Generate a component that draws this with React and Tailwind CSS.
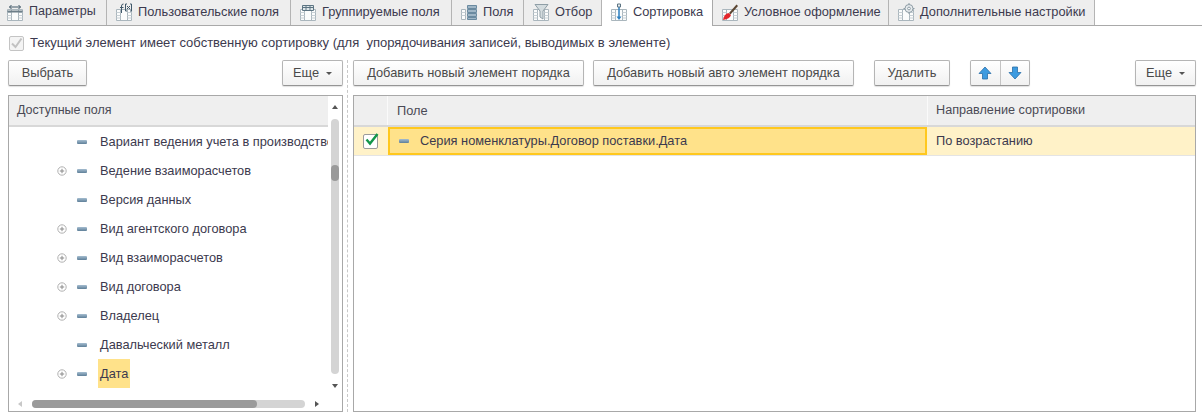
const TableBase = ({ c = "#aab6bd" }) => (
  <g fill="none" stroke={c} strokeWidth="1">
    <path d="M1.5 6.5h15v11h-15z" fill="#fbfcfc" />
    <path d="M5.5 6.5v11M12.5 6.5v11" />
    <path d="M1.5 9.5h4M1.5 12.5h4M1.5 15h4M12.5 9.5h4M12.5 12.5h4M12.5 15h4" stroke="#c8d0d5" />
  </g>
);

function TabIcon({ kind }) {
  return (
    <svg width="18" height="18" viewBox="0 0 18 18" className="shrink-0">
      {kind !== "fields" && <TableBase />}
      {kind === "params" && (
        <g>
          <path d="M1.5 8.5h15" stroke="#6d7f89" strokeWidth="2" />
          <path d="M3.5 4h11M3.5 4l2-2M3.5 4l2 2M14.5 4l-2-2M14.5 4l-2 2" stroke="#3f5666" fill="none" />
        </g>
      )}
      {kind === "user" && (
        <g fill="none" stroke="#40586a">
          <path d="M6.5 10V3q0-2 2-2M5 4.5h3.5" />
          <path d="M12 1h-1.5v7H12M15 1h1.5v7H15M12 3l3 3M15 3l-3 3" />
        </g>
      )}
      {kind === "group" && (
        <g>
          <path d="M3.5 2.5h11v5h-11z" fill="#dfe7ea" stroke="#5d7482" />
          <path d="M7 2.5v5M11 2.5v5M3.5 4.5h11" stroke="#5d7482" />
        </g>
      )}
      {kind === "fields" && (
        <g>
          <path d="M1.5 6.5h4v10h-4z" fill="#fbfcfc" stroke="#aab6bd" />
          <path d="M1.5 9.5h4M1.5 12.5h4" stroke="#c8d0d5" />
          <g fill="#9fb6c6" stroke="#6a8aa0">
            <path d="M7.5 2.5h9v3h-9zM7.5 6.5h9v3h-9zM7.5 10.5h9v3h-9zM7.5 14.5h9v2h-9z" />
          </g>
        </g>
      )}
      {kind === "filter" && <path d="M3 1.5h13l-5 6.5v8l-3-2V8z" fill="#d4dcdf" stroke="#8f9ea6" />}
      {kind === "sort" && (
        <g>
          <path d="M9 3v12" stroke="#2c7fc0" strokeWidth="1.5" />
          <path d="M6.5 13.5L9 17l2.5-3.5z" fill="#2c7fc0" />
          <path d="M7.5 1h3v3h-3z" fill="#e8eef2" stroke="#5d7482" />
        </g>
      )}
      {kind === "cond" && (
        <g>
          <path d="M8 10L15.5 1.5l1.5 1.5L9.5 11.5z" fill="#5b4632" />
          <path d="M2 17q1-6 5.5-7l2.5 2q-1 4-8 5z" fill="#e3262b" />
        </g>
      )}
      {kind === "extra" && (
        <g fill="#e8ecee" stroke="#8d9ca5">
          <circle cx="12" cy="5.5" r="4" />
          <circle cx="12" cy="5.5" r="1.4" fill="#fff" />
          <path d="M12 0v1.5M12 9.5V11M6.5 5.5H8M16 5.5h1.5" />
        </g>
      )}
    </svg>
  );
}

const tabs = [
  ["Параметры", "params", "w-[107px] pl-[6px] text-[12.5px]"],
  ["Пользовательские поля", "user", "w-[184px] pl-[8px]"],
  ["Группируемые поля", "group", "w-[161px] pl-[8px]"],
  ["Поля", "fields", "w-[72px] pl-[8px]"],
  ["Отбор", "filter", "w-[78px] pl-[8px]"],
  ["Сортировка", "sort", "w-[111px] pl-[8px]"],
  ["Условное оформление", "cond", "w-[176px] pl-[8px]"],
  ["Дополнительные настройки", "extra", "w-[206px] pl-[8px]"],
];

const Btn = ({ children, className = "" }) => (
  <button className={`h-[26px] shrink-0 flex items-center justify-center rounded-[2px] border border-[#b5b5b5] border-b-[#959595] bg-gradient-to-b from-white to-[#f1f1f1] shadow-[0_1px_1px_rgba(0,0,0,0.12)] text-[#4a4a4a] ${className}`}>
    {children}
  </button>
);

const More = ({ className = "" }) => (
  <Btn className={`w-[61px] gap-[7px] ${className}`}>
    <span>Еще</span>
    <span className="w-0 h-0 mt-[1px] border-x-[3px] border-x-transparent border-t-[3px] border-t-[#555]" />
  </Btn>
);

const Arrow = ({ dir }) => (
  <svg width="14" height="14" viewBox="0 0 14 14">
    <path
      d={dir === "up" ? "M7 1l6 6.5H9.5V13h-5V7.5H1z" : "M7 13l6-6.5H9.5V1h-5v5.5H1z"}
      fill="#3d9be0"
      stroke="#2a6fa8"
      strokeWidth="0.8"
    />
  </svg>
);

const Dash = () => <span className="block w-[10px] h-[4px] rounded-[1px] bg-gradient-to-b from-[#a5bdd0] to-[#5f8099] shrink-0" />;

const Plus = () => (
  <svg width="10" height="10" viewBox="0 0 10 10" className="shrink-0">
    <circle cx="5" cy="5" r="4.2" fill="#fff" stroke="#b0b0b0" />
    <path d="M2.8 5h4.4M5 2.8v4.4" stroke="#8a8a8a" />
  </svg>
);

const rows = [
  ["Вариант ведения учета в производстве", false],
  ["Ведение взаиморасчетов", true],
  ["Версия данных", false],
  ["Вид агентского договора", true],
  ["Вид взаиморасчетов", true],
  ["Вид договора", true],
  ["Владелец", true],
  ["Давальческий металл", false],
  ["Дата", true, true],
];

export default function App() {
  return (
    <div className="w-[1202px] h-[417px] overflow-hidden bg-white text-[12.8px] text-[#3c3a4e] font-['Liberation_Sans',Arial,sans-serif]">
      <div className="flex h-[26px] border-b border-[#a9a9a9] bg-white">
        {tabs.map(([t, k, w]) => {
          const active = k === "sort";
          return (
            <div
              key={k}
              className={`${w} shrink-0 h-[25px] pb-[2px] flex items-center gap-[5px] border-r border-[#b4b4b4] ${active ? "bg-white border-r-[#a9a9a9] h-[26px] relative z-10 -mb-px" : "bg-[#eeeeee]"}`}
            >
              <TabIcon kind={k} />
              <span className="whitespace-nowrap">{t}</span>
            </div>
          );
        })}
      </div>

      <div className="flex items-center h-[18px] mt-[8px] ml-[9px] gap-[6px] text-[13px]">
        <span className="w-[15px] h-[15px] flex items-center justify-center border border-[#c4c4c4] rounded-[2px] bg-[#f4f4f4]">
          <svg width="13" height="13" viewBox="0 0 13 13">
            <path d="M2 6.5L5.5 10L11.5 1.5" fill="none" stroke="#c2c2c2" strokeWidth="2" />
          </svg>
        </span>
        <span className="whitespace-pre">Текущий элемент имеет собственную сортировку (для  упорядочивания записей, выводимых в элементе)</span>
      </div>

      <div className="flex mt-[8px] pl-[8px] pr-[6px] h-[352px]">
        <div className="w-[335px] shrink-0 flex flex-col">
          <div className="flex justify-between">
            <Btn className="w-[79px]">Выбрать</Btn>
            <More />
          </div>
          <div className="mt-[9px] h-[317px] border border-[#a8a8a8] relative flex flex-col overflow-hidden">
            <div className="h-[31px] shrink-0 mr-[14px] bg-[#efefef] border-b-2 border-[#d8d8d8] flex items-center pl-[8px] text-[12.5px] text-[#4a4a55]">
              Доступные поля
            </div>
            <div className="flex-1 mr-[14px] overflow-hidden">
              {rows.map(([t, plus, sel]) => (
                <div key={t} className="h-[29px] flex items-center">
                  <span className="w-[59px] shrink-0 flex justify-end pr-[1px]">{plus && <Plus />}</span>
                  <span className="w-[19px] shrink-0 flex justify-end"><Dash /></span>
                  <span className={`ml-[11px] h-[29px] flex items-center px-[2px] whitespace-nowrap ${sel ? "bg-[#ffe28a]" : ""}`}>{t}</span>
                </div>
              ))}
            </div>
            {/* scrollbars */}
            <div className="absolute right-[3px] top-[23px] w-[8px] h-[255px] rounded-full bg-[#d4d4d4]">
              <div className="absolute top-[46px] left-0 w-[8px] h-[16px] rounded-full bg-[#9a9a9a]" />
            </div>
            <span className="absolute right-[4px] top-[9px] w-0 h-0 border-x-[3px] border-x-transparent border-b-[4px] border-b-[#555]" />
            <span className="absolute right-[4px] bottom-[23px] w-0 h-0 border-x-[3px] border-x-transparent border-t-[4px] border-t-[#555]" />
            <div className="absolute left-[23px] bottom-[3px] w-[273px] h-[8px] rounded-full bg-[#d4d4d4]">
              <div className="w-[225px] h-[8px] rounded-full bg-[#9a9a9a]" />
            </div>
            <span className="absolute left-[9px] bottom-[4px] w-0 h-0 border-y-[3px] border-y-transparent border-r-[4px] border-r-[#c8c8c8]" />
            <span className="absolute left-[306px] bottom-[4px] w-0 h-0 border-y-[3px] border-y-transparent border-l-[4px] border-l-[#555]" />
          </div>
        </div>

        <div className="w-[10px] shrink-0 flex justify-start pl-[4px]">
          <div className="w-0 h-full border-l border-dashed border-[#c8c8c8]" />
        </div>

        <div className="flex-1 flex flex-col">
          <div className="flex">
            <Btn className="w-[231px]">Добавить новый элемент порядка</Btn>
            <Btn className="w-[261px] ml-[9px]">Добавить новый авто элемент порядка</Btn>
            <Btn className="w-[76px] ml-[20px]">Удалить</Btn>
            <div className="ml-[20px] flex h-[26px] w-[60px] rounded-[2px] border border-[#b5b5b5] border-b-[#959595] bg-gradient-to-b from-white to-[#f1f1f1] shadow-[0_1px_1px_rgba(0,0,0,0.12)]">
              <span className="flex-1 flex items-center justify-center border-r border-[#c4c4c4]"><Arrow dir="up" /></span>
              <span className="flex-1 flex items-center justify-center"><Arrow dir="down" /></span>
            </div>
            <More className="ml-auto" />
          </div>
          <div className="mt-[9px] h-[317px] border border-[#a8a8a8] flex flex-col overflow-hidden text-[#4a4a55]">
            <div className="h-[31px] shrink-0 flex bg-[#efefef] border-b-2 border-[#d8d8d8]">
              <div className="w-[34px] border-r border-[#fafafa]" />
              <div className="w-[540px] pl-[9px] flex items-center border-r border-[#fafafa]">Поле</div>
              <div className="flex-1 pl-[8px] flex items-center text-[12.65px]">Направление сортировки</div>
            </div>
            <div className="h-[28px] shrink-0 flex bg-[#fff2c8] text-[#3c3a4e]">
              <div className="w-[34px] pr-[1px] flex items-center justify-center relative">
                <span className="w-[15px] h-[15px] border border-[#9b9b9b] rounded-[2px] bg-white relative">
                  <svg width="17" height="15" viewBox="0 0 17 15" className="absolute -top-[3px] left-[0px]">
                    <path d="M2.5 7.5L6 11.5L13.5 2" fill="none" stroke="#12964a" strokeWidth="2.4" />
                  </svg>
                </span>
              </div>
              <div className="w-[539px] bg-[#ffe28a] border-2 border-[#ffc81e] flex items-center pl-[9px] gap-[11px]">
                <Dash />
                <span>Серия номенклатуры.Договор поставки.Дата</span>
              </div>
              <div className="flex-1 pl-[9px] flex items-center">По возрастанию</div>
            </div>
            <div className="h-px bg-[#e4e4e4] shrink-0" />
          </div>
        </div>
      </div>
    </div>
  );
}
